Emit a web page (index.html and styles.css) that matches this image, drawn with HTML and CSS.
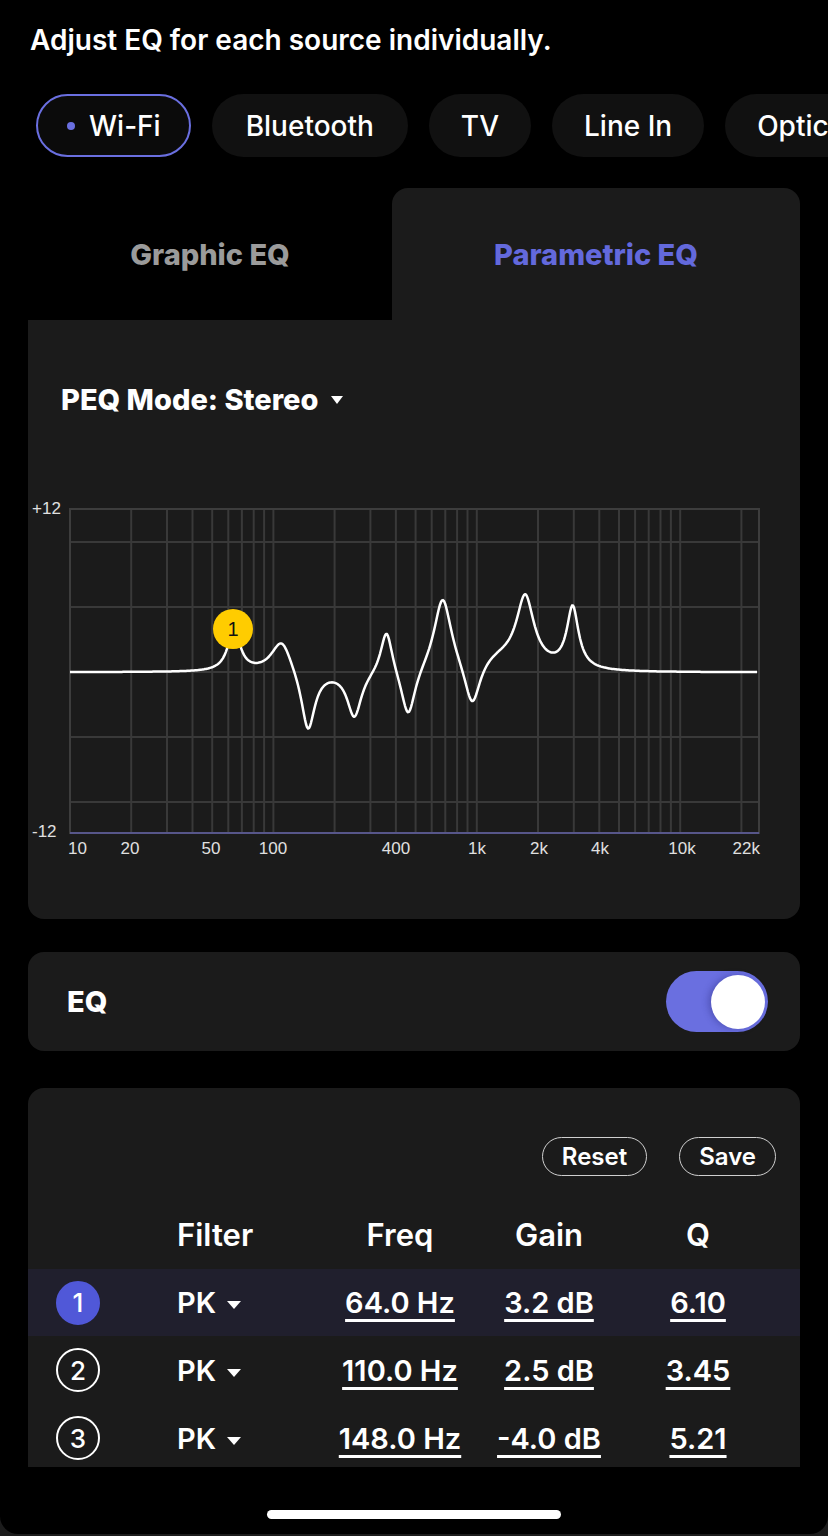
FILE: index.html
```html
<!DOCTYPE html>
<html lang="en">
  <head>
    <meta charset="UTF-8" />
    <meta name="viewport" content="width=device-width, initial-scale=1.0" />
    <title>Source EQ</title>
    <link rel="stylesheet" href="styles.css">
  </head>
  <body>
    <div class="screen">
      <p class="intro">Adjust EQ for each source individually.</p>

      <div class="sources">
        <div class="source active"><span class="dot"></span>Wi-Fi</div>
        <div class="source">Bluetooth</div>
        <div class="source">TV</div>
        <div class="source">Line In</div>
        <div class="source">Optical</div>
      </div>

      <div class="eq-tabs">
        <div class="tab tab-graphic">Graphic EQ</div>
        <div class="tab tab-parametric">Parametric EQ</div>
      </div>

      <section class="peq-panel">
        <div class="peq-mode">PEQ Mode: Stereo <span class="caret"></span></div>
        <svg class="chart" viewBox="28 490 772 380" xmlns="http://www.w3.org/2000/svg">
          <g id="grid" stroke="#393939" stroke-width="2"></g>
          <rect x="70" y="509" width="689" height="324" fill="none" stroke="#3d3d3d" stroke-width="2" />
          <line x1="70" y1="833" x2="759" y2="833" stroke="#57568a" stroke-width="2" />
          <g class="axis-label">
            <text x="32" y="514">+12</text>
            <text x="32" y="837">-12</text>
            <text x="68" y="854">10</text>
            <text x="130" y="854" text-anchor="middle">20</text>
            <text x="211" y="854" text-anchor="middle">50</text>
            <text x="273" y="854" text-anchor="middle">100</text>
            <text x="396" y="854" text-anchor="middle">400</text>
            <text x="477" y="854" text-anchor="middle">1k</text>
            <text x="539" y="854" text-anchor="middle">2k</text>
            <text x="600" y="854" text-anchor="middle">4k</text>
            <text x="682" y="854" text-anchor="middle">10k</text>
            <text x="760" y="854" text-anchor="end">22k</text>
          </g>
          <path id="curve" fill="none" stroke="#fff" stroke-width="2.5" stroke-linejoin="round" />
          <circle cx="233" cy="629" r="20" fill="#ffcc00" />
          <text class="marker-num" x="233" y="636" text-anchor="middle">1</text>
        </svg>
      </section>

      <section class="card eq-switch">
        <span class="eq-label">EQ</span>
        <div class="toggle on"><span class="knob"></span></div>
      </section>

      <section class="card bands">
        <div class="band-actions">
          <button class="pill-btn">Reset</button>
          <button class="pill-btn">Save</button>
        </div>
        <div class="band-row band-head">
          <span></span>
          <span class="col-filter">Filter</span>
          <span class="col-val">Freq</span>
          <span class="col-val">Gain</span>
          <span class="col-val">Q</span>
        </div>
        <div class="band-row selected">
          <span class="num">1</span>
          <span class="col-filter">PK <span class="caret small"></span></span>
          <span class="col-val link">64.0 Hz</span>
          <span class="col-val link">3.2 dB</span>
          <span class="col-val link">6.10</span>
        </div>
        <div class="band-row">
          <span class="num">2</span>
          <span class="col-filter">PK <span class="caret small"></span></span>
          <span class="col-val link">110.0 Hz</span>
          <span class="col-val link">2.5 dB</span>
          <span class="col-val link">3.45</span>
        </div>
        <div class="band-row">
          <span class="num">3</span>
          <span class="col-filter">PK <span class="caret small"></span></span>
          <span class="col-val link">148.0 Hz</span>
          <span class="col-val link">-4.0 dB</span>
          <span class="col-val link">5.21</span>
        </div>
      </section>

      <div class="home-bar"></div>
    </div>

    <script>
      // plot area in page pixels
      const X0 = 70, DECADE = 203.4, Y0 = 672, PX_DB = 13.5;
      const xOf = (f) => X0 + DECADE * Math.log10(f / 10);

      // grid lines
      const grid = document.getElementById("grid");
      const ns = "http://www.w3.org/2000/svg";
      function addLine(x1, y1, x2, y2) {
        const l = document.createElementNS(ns, "line");
        l.setAttribute("x1", x1); l.setAttribute("y1", y1);
        l.setAttribute("x2", x2); l.setAttribute("y2", y2);
        grid.appendChild(l);
      }
      [542, 607, 672, 737, 802].forEach((y) => addLine(70, y, 759, y));
      [10, 100, 1000, 10000].forEach((dec) => {
        for (let i = 2; i <= 10; i++) {
          const f = dec * i;
          if (f > 20000) break;
          const x = xOf(f).toFixed(1);
          addLine(x, 509, x, 833);
        }
      });

      // peaking filters [freq, gain, q]
      const bands = [
        [64, 3.2, 6.1],
        [110, 2.5, 3.45],
        [148, -4.6, 5.21],
        [250, -3.4, 5],
        [360, 3.4, 6],
        [460, -3.8, 5],
        [680, 5.6, 4],
        [950, -3.6, 4.5],
        [1250, 1.0, 1.5],
        [1730, 5.2, 4],
        [2960, 4.6, 6],
      ];

      function peakDb(f, f0, gain, q) {
        const fs = 48000;
        const A = Math.pow(10, gain / 40);
        const w0 = (2 * Math.PI * f0) / fs;
        const alpha = Math.sin(w0) / (2 * q);
        const c = Math.cos(w0);
        const b0 = 1 + alpha * A, b1 = -2 * c, b2 = 1 - alpha * A;
        const a0 = 1 + alpha / A, a1 = -2 * c, a2 = 1 - alpha / A;
        const w = (2 * Math.PI * f) / fs;
        const nr = b0 + b1 * Math.cos(w) + b2 * Math.cos(2 * w);
        const ni = -(b1 * Math.sin(w) + b2 * Math.sin(2 * w));
        const dr = a0 + a1 * Math.cos(w) + a2 * Math.cos(2 * w);
        const di = -(a1 * Math.sin(w) + a2 * Math.sin(2 * w));
        return 10 * Math.log10((nr * nr + ni * ni) / (dr * dr + di * di));
      }

      let d = "";
      for (let x = 70; x <= 757; x += 1) {
        const f = 10 * Math.pow(10, (x - X0) / DECADE);
        let db = 0;
        bands.forEach((b) => (db += peakDb(f, b[0], b[1], b[2])));
        const y = (Y0 - db * PX_DB).toFixed(1);
        d += (x === 70 ? "M" : "L") + x + " " + y + " ";
      }
      document.getElementById("curve").setAttribute("d", d);
    </script>
  </body>
</html>
```

FILE: styles.css
```css
body {
  margin: 0;
  background-color: #1c1c1c;
  font-family: Inter, "Noto Sans", sans-serif;
  color: #fff;
}
.screen {
  min-height: 1534px;
  box-sizing: border-box;
  padding: 24px 28px 0;
  background-color: #000;
  border-radius: 0 0 18px 18px;
  overflow: hidden;
}
.intro {
  margin: 0 0 0 2px;
  font-size: 28px;
  line-height: 32px;
  font-weight: 600;
}
.sources {
  display: flex;
  gap: 21px;
  margin: 38px -28px 0 8px;
  overflow: hidden;
}
.source {
  flex: none;
  display: flex;
  align-items: center;
  height: 63px;
  box-sizing: border-box;
  padding: 0 30px;
  border: 2px solid transparent;
  border-radius: 32px;
  background-color: #111;
  font-size: 28px;
  font-weight: 500;
}
.source:nth-child(2) {
  padding: 0 32px;
}
.source.active {
  padding: 0 28px 0 29px;
  border-color: #6a6fe0;
  background-color: #0b0b0b;
}
.dot {
  width: 8px;
  height: 8px;
  margin-right: 14px;
  border-radius: 50%;
  background-color: #6a6fe0;
}
.eq-tabs {
  display: flex;
  height: 132px;
  margin-top: 31px;
}
.tab {
  display: flex;
  align-items: center;
  justify-content: center;
  font-size: 29px;
  font-weight: 800;
  color: #9b9b9b;
}
.tab-graphic {
  width: 364px;
}
.tab-parametric {
  flex: 1;
  background-color: #1b1b1b;
  border-radius: 16px 16px 0 0;
  color: #6369dc;
}
.peq-panel {
  padding: 62px 0 49px;
  background-color: #1b1b1b;
  border-radius: 0 0 16px 16px;
}
.peq-mode {
  display: flex;
  align-items: center;
  gap: 12px;
  padding-left: 33px;
  font-size: 29px;
  line-height: 36px;
  font-weight: 800;
}
.caret {
  width: 0;
  height: 0;
  border-left: 6px solid transparent;
  border-right: 6px solid transparent;
  border-top: 8px solid #fff;
}
.caret.small {
  display: inline-block;
  margin-left: 4px;
  vertical-align: middle;
  border-left-width: 7px;
  border-right-width: 7px;
}
.chart {
  display: block;
  width: 772px;
  height: 380px;
  margin-top: 72px;
}
.axis-label text {
  font-family: "Liberation Sans", Arial, sans-serif;
  font-size: 17px;
  fill: #e0e0e0;
}
.marker-num {
  font-family: "Liberation Sans", Arial, sans-serif;
  font-size: 20px;
  fill: #111;
}
.card {
  background-color: #1b1b1b;
  border-radius: 16px;
}
.eq-switch {
  display: flex;
  align-items: center;
  justify-content: space-between;
  height: 99px;
  margin-top: 33px;
  padding: 0 32px 0 39px;
}
.eq-label {
  font-size: 29px;
  font-weight: 800;
}
.toggle {
  position: relative;
  width: 102px;
  height: 61px;
  border-radius: 31px;
  background-color: #6a6fe0;
}
.knob {
  position: absolute;
  top: 3.5px;
  right: 3px;
  width: 54px;
  height: 54px;
  border-radius: 50%;
  background-color: #fff;
  box-shadow: -3px 0 6px rgba(40, 40, 120, 0.35);
}
.bands {
  height: 379px;
  margin-top: 37px;
  border-radius: 16px 16px 0 0;
  overflow: hidden;
}
.band-actions {
  display: flex;
  justify-content: flex-end;
  gap: 32px;
  padding: 49px 24px 0 0;
}
.pill-btn {
  height: 39px;
  padding: 0 19px;
  border: 1.5px solid #cfcfcf;
  border-radius: 20px;
  background: transparent;
  color: #fff;
  font-family: inherit;
  font-size: 24px;
  font-weight: 600;
}
.band-row {
  display: grid;
  grid-template-columns: 100px 197px 150px 148px 150px;
  align-items: center;
  height: 68px;
  font-size: 29px;
  font-weight: 600;
}
.band-head {
  height: 70px;
  margin-top: 23px;
  font-size: 31px;
}
.band-row.selected {
  height: 67px;
  background-color: #201f2d;
}
.col-filter {
  padding-left: 49px;
}
.col-val {
  text-align: center;
}
.link {
  text-decoration: underline;
  text-decoration-thickness: 3px;
  text-underline-offset: 6px;
}
.num {
  justify-self: center;
  display: flex;
  align-items: center;
  justify-content: center;
  width: 44px;
  height: 44px;
  box-sizing: border-box;
  border: 2px solid #fff;
  border-radius: 50%;
  font-size: 26px;
  font-weight: 500;
}
.selected .num {
  border-color: #5058d8;
  background-color: #5058d8;
}
.home-bar {
  width: 294px;
  height: 9px;
  margin: 43px auto 0;
  border-radius: 5px;
  background-color: #fff;
}
```
